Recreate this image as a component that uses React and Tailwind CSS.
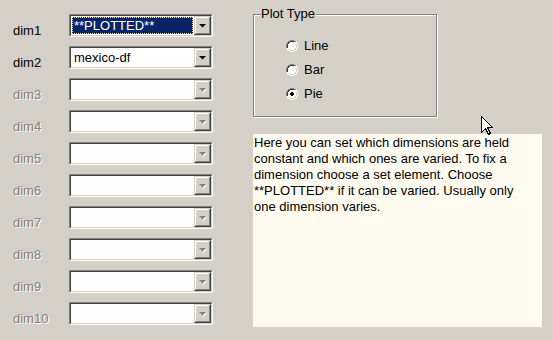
import React from "react";

const font = { fontFamily: '"Liberation Sans", Arial, sans-serif' };

function Arrow({ disabled }) {
  return (
    <svg width="9" height="6" viewBox="0 0 9 6" className="block">
      {disabled && <polygon points="2,2 9,2 5.5,5.5" fill="#ffffff" />}
      <polygon points="1,1 8,1 4.5,4.5" fill={disabled ? "#808080" : "#000000"} />
    </svg>
  );
}

function Combo({ value, selected, disabled }) {
  return (
    <div className="w-[144px] h-[23px] border border-t-[#808080] border-l-[#808080] border-b-white border-r-white">
      <div className="w-full h-full border border-t-[#404040] border-l-[#404040] border-b-[#d4d0c8] border-r-[#d4d0c8] bg-white flex">
        <div className="flex-1 min-w-0 flex items-stretch p-[1px]">
          {selected ? (
            <div className="flex-1 bg-[#0a246a] text-white border border-dotted border-[#e8e4a0] flex items-center pl-[1px] leading-[16px] text-[13px]">
              {value}
            </div>
          ) : (
            <div className="flex-1 flex items-center pl-[2px] leading-[16px] text-[13px] text-black">{value}</div>
          )}
        </div>
        <div className="w-[17px] h-full border border-t-[#d4d0c8] border-l-[#d4d0c8] border-b-[#404040] border-r-[#404040]">
          <div className="w-full h-full border border-t-white border-l-white border-b-[#808080] border-r-[#808080] bg-[#d4d0c8] flex items-center justify-center">
            <Arrow disabled={disabled} />
          </div>
        </div>
      </div>
    </div>
  );
}

function Radio({ checked, label }) {
  return (
    <div className="flex items-center gap-[6px] h-[16px]">
      <svg width="12" height="12" viewBox="0 0 12 12" className="block">
        <path d="M4 0h4v1h2v1h1v2h1v4h-1v2h-1v1h-2v1h-4v-1h-2v-1h-1v-2h-1v-4h1v-2h1v-1h2z" fill="#ffffff" />
        <path d="M4 0h4v1h2v1h-2v-1h-4v1h-2v2h-1v4h-1v-4h1v-2h1v-1h2z" fill="#808080" />
        <path d="M4 1h4v1h-4v1h-1v1h-1v4h-1v-4h1v-2h2z" fill="#404040" />
        <path d="M11 4h1v4h-1v2h-1v1h-2v1h-4v-1h4v-1h2v-2h1z" fill="#ffffff" />
        <path d="M10 4h1v4h-1v2h-2v1h-4v-1h4v-1h1v-1h1z" fill="#d4d0c8" />
        <path d="M4 2h4v1h1v1h1v4h-1v1h-1v1h-4v-1h-1v-1h-1v-4h1v-1h1z" fill="#ffffff" />
        {checked && <path d="M5 4h2v1h1v2h-1v1h-2v-1h-1v-2h1z" fill="#000000" />}
      </svg>
      <span className="text-[13px] leading-[16px] text-black">{label}</span>
    </div>
  );
}

export default function App() {
  const rows = [
    { label: "dim1", value: "**PLOTTED**", selected: true, enabled: true },
    { label: "dim2", value: "mexico-df", enabled: true },
    { label: "dim3" },
    { label: "dim4" },
    { label: "dim5" },
    { label: "dim6" },
    { label: "dim7" },
    { label: "dim8" },
    { label: "dim9" },
    { label: "dim10" },
  ];
  return (
    <div className="w-[553px] h-[340px] bg-[#d4d0c8] relative overflow-hidden flex" style={font}>
      <div className="w-[253px] pt-[14px] flex flex-col gap-[9px]">
        {rows.map((r) => (
          <div key={r.label} className="flex items-start h-[23px]">
            <div
              className={
                "w-[69px] pl-[13px] mt-[9px] text-[13px] leading-[16px] " +
                (r.enabled ? "text-black" : "text-[#808080] [text-shadow:1px_1px_0_#ffffff]")
              }
            >
              {r.label}
            </div>
            <Combo value={r.value} selected={r.selected} disabled={!r.enabled} />
          </div>
        ))}
      </div>
      <div className="flex flex-col pt-[14px]">
        <div className="relative w-[184px] h-[103px] border border-[#808080] shadow-[inset_1px_1px_0_#ffffff,1px_1px_0_#ffffff]">
          <div className="absolute left-[7px] top-[-9px] bg-[#d4d0c8] text-[13px] leading-[16px] text-black pr-[1px]">
            Plot Type
          </div>
          <div className="pl-[32px] pt-[23px] flex flex-col gap-[8px]">
            <Radio label="Line" />
            <Radio label="Bar" />
            <Radio label="Pie" checked />
          </div>
        </div>
        <div className="mt-[17px] w-[289px] h-[193px] bg-[#fffbf0] pl-[1px] pt-[1px] text-[13px] leading-[16px] text-black whitespace-nowrap">
          Here you can set which dimensions are held
          <br />
          constant and which ones are varied. To fix a
          <br />
          dimension choose a set element. Choose
          <br />
          **PLOTTED** if it can be varied. Usually only
          <br />
          one dimension varies.
        </div>
      </div>
      <svg
        width="13"
        height="20"
        viewBox="0 0 13 20"
        className="absolute left-[481px] top-[116px]"
      >
        <path
          d="M0.5 0.5 L0.5 16.5 L4.5 12.5 L7.5 18.5 L9.5 17.5 L6.5 11.5 L11.5 11.5 Z"
          fill="#ffffff"
          stroke="#000000"
          strokeWidth="1"
          shapeRendering="crispEdges"
        />
      </svg>
    </div>
  );
}
